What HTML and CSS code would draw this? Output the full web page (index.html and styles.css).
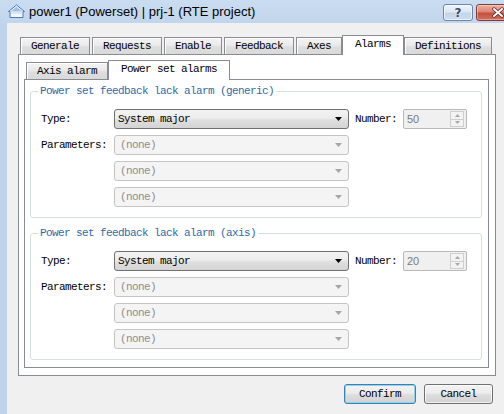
FILE: index.html
```html
<!DOCTYPE html>
<html>
<head>
<meta charset="utf-8">
<title>power1 (Powerset)</title>
<link rel="stylesheet" href="styles.css">
</head>
<body>
<div class="window">
  <div class="titlebar">
    <svg class="app-icon" width="17" height="14" viewBox="0 0 17 14">
      <path d="M0.5 7.5 L8.5 1 L16.5 7.5 L15 7.5 L15 13.5 L2 13.5 L2 7.5 Z" fill="#f4f8fd" stroke="#4a78b8"/>
      <path d="M2.5 7.5 L8.5 2.8 L14.5 7.5 Z" fill="#9fc0e8"/>
      <path d="M3 9 L14 9" stroke="#bcd3ee"/>
    </svg>
    <span class="title">power1 (Powerset) | prj-1 (RTE project)</span>
    <div class="caption-buttons">
      <div class="cap-btn help"><span>?</span></div>
      <div class="cap-btn close">
        <svg width="14" height="11" viewBox="0 0 14 11">
          <path d="M3 2 L11 9 M11 2 L3 9" stroke="#5a1f1f" stroke-width="3.4" stroke-linecap="round"/>
          <path d="M3 2 L11 9 M11 2 L3 9" stroke="#ffffff" stroke-width="2" stroke-linecap="round"/>
        </svg>
      </div>
    </div>
  </div>
  <div class="client">
    <div class="tabwidget">
      <div class="tabbar">
        <div class="tab">Generale</div>
        <div class="tab">Requests</div>
        <div class="tab">Enable</div>
        <div class="tab">Feedback</div>
        <div class="tab">Axes</div>
        <div class="tab active">Alarms</div>
        <div class="tab">Definitions</div>
      </div>
      <div class="pane outer-pane">
        <div class="tabwidget">
          <div class="tabbar">
            <div class="tab">Axis alarm</div>
            <div class="tab active">Power set alarms</div>
          </div>
          <div class="pane inner-pane">
            <fieldset class="group">
              <legend>Power set feedback lack alarm (generic)</legend>
              <div class="form">
                <div class="label">Type:</div>
                <div class="combo">
                  <span class="value">System major</span>
                  <svg class="arrow" width="7" height="4" viewBox="0 0 7 4"><path d="M0 0 H7 L3.5 4 Z" fill="#000"/></svg>
                </div>
                <div class="label num-label">Number:</div>
                <div class="spin">
                  <span class="spin-value">50</span>
                  <div class="spin-btns">
                    <div class="spin-btn"><svg width="5" height="3" viewBox="0 0 5 3"><path d="M0 3 L2.5 0 L5 3 Z" fill="#a8a8a8"/></svg></div>
                    <div class="spin-btn"><svg width="5" height="3" viewBox="0 0 5 3"><path d="M0 0 L5 0 L2.5 3 Z" fill="#a8a8a8"/></svg></div>
                  </div>
                </div>
                <div class="label">Parameters:</div>
                <div class="combo disabled">
                  <span class="value">(none)</span>
                  <svg class="arrow" width="7" height="4" viewBox="0 0 7 4"><path d="M0 0 H7 L3.5 4 Z" fill="#a6a6a6"/></svg>
                </div>
                <div class="filler"></div>
                <div class="combo disabled">
                  <span class="value">(none)</span>
                  <svg class="arrow" width="7" height="4" viewBox="0 0 7 4"><path d="M0 0 H7 L3.5 4 Z" fill="#a6a6a6"/></svg>
                </div>
                <div class="filler"></div>
                <div class="combo disabled">
                  <span class="value">(none)</span>
                  <svg class="arrow" width="7" height="4" viewBox="0 0 7 4"><path d="M0 0 H7 L3.5 4 Z" fill="#a6a6a6"/></svg>
                </div>
              </div>
            </fieldset>
            <fieldset class="group">
              <legend>Power set feedback lack alarm (axis)</legend>
              <div class="form">
                <div class="label">Type:</div>
                <div class="combo">
                  <span class="value">System major</span>
                  <svg class="arrow" width="7" height="4" viewBox="0 0 7 4"><path d="M0 0 H7 L3.5 4 Z" fill="#000"/></svg>
                </div>
                <div class="label num-label">Number:</div>
                <div class="spin">
                  <span class="spin-value">20</span>
                  <div class="spin-btns">
                    <div class="spin-btn"><svg width="5" height="3" viewBox="0 0 5 3"><path d="M0 3 L2.5 0 L5 3 Z" fill="#a8a8a8"/></svg></div>
                    <div class="spin-btn"><svg width="5" height="3" viewBox="0 0 5 3"><path d="M0 0 L5 0 L2.5 3 Z" fill="#a8a8a8"/></svg></div>
                  </div>
                </div>
                <div class="label">Parameters:</div>
                <div class="combo disabled">
                  <span class="value">(none)</span>
                  <svg class="arrow" width="7" height="4" viewBox="0 0 7 4"><path d="M0 0 H7 L3.5 4 Z" fill="#a6a6a6"/></svg>
                </div>
                <div class="filler"></div>
                <div class="combo disabled">
                  <span class="value">(none)</span>
                  <svg class="arrow" width="7" height="4" viewBox="0 0 7 4"><path d="M0 0 H7 L3.5 4 Z" fill="#a6a6a6"/></svg>
                </div>
                <div class="filler"></div>
                <div class="combo disabled">
                  <span class="value">(none)</span>
                  <svg class="arrow" width="7" height="4" viewBox="0 0 7 4"><path d="M0 0 H7 L3.5 4 Z" fill="#a6a6a6"/></svg>
                </div>
              </div>
            </fieldset>
          </div>
        </div>
      </div>
    </div>
    <div class="buttons">
      <div class="btn default">Confirm</div>
      <div class="btn cancel">Cancel</div>
    </div>
  </div>
</div>
</body>
</html>
```
FILE: styles.css
```css
* { box-sizing: border-box; }
html, body { margin: 0; padding: 0; }
body {
  width: 504px;
  height: 414px;
  overflow: hidden;
  font-family: "Liberation Mono", "DejaVu Sans Mono", monospace;
  font-size: 11px;
  letter-spacing: -0.6px;
  color: #000;
}
.window {
  width: 504px;
  height: 414px;
  display: flex;
  flex-direction: column;
  background: #bfd4eb;
  overflow: hidden;
}
.titlebar {
  height: 23px;
  display: flex;
  align-items: center;
  padding-left: 8px;
  background: linear-gradient(#cadcf0, #c1d5ec);
  flex-shrink: 0;
}
.app-icon { margin-top: -2px; }
.title {
  margin-left: 4px;
  font-family: "Liberation Sans", Arial, sans-serif;
  font-size: 13px;
  letter-spacing: 0;
  color: #000;
}
.caption-buttons {
  margin-left: auto;
  align-self: flex-start;
  margin-top: 4px;
  margin-right: -15px;
  display: flex;
  gap: 3px;
}
.cap-btn {
  height: 17px;
  border-radius: 3px;
  display: flex;
  align-items: center;
  justify-content: center;
}
.help {
  width: 30px;
  border: 1px solid #6b87ad;
  background: linear-gradient(#eef4fb 0%, #dbe6f3 48%, #c3d4ea 52%, #cddcef 100%);
  box-shadow: inset 0 0 0 1px rgba(255,255,255,0.6);
}
.help span {
  font-family: "DejaVu Sans", sans-serif;
  font-size: 12px;
  font-weight: bold;
  letter-spacing: 0;
  color: #3b4a60;
  text-shadow: 0 0 2px #fff, 0 0 1px #fff;
}
.close {
  width: 43px;
  border: 1px solid #833a3a;
  background: linear-gradient(#eab0a3 0%, #d98473 48%, #c34f3d 52%, #d2705d 100%);
  box-shadow: inset 0 0 0 1px rgba(255,255,255,0.35);
}
.client {
  flex: 1;
  margin-left: 7px;
  background: #f0f0f0;
  padding: 12px 8px 10px 11px;
  display: flex;
  flex-direction: column;
}
.tabwidget {
  display: flex;
  flex-direction: column;
}
.tabbar {
  display: flex;
  align-items: flex-end;
  height: 20px;
  margin-bottom: -1px;
  padding-left: 2px;
  position: relative;
  z-index: 2;
}
.tab {
  height: 17px;
  margin-bottom: 1px;
  margin-right: 2px;
  padding: 0 10px 1px;
  display: flex;
  align-items: center;
  border: 1px solid #898c95;
  border-bottom: none;
  background: linear-gradient(#f4f4f4 0%, #ebebeb 45%, #dedede 55%, #d9d9d9 100%);
  box-shadow: inset 1px 1px 0 #ffffff;
  white-space: nowrap;
}
.tab.active {
  height: 20px;
  margin-bottom: 0;
  margin-left: -2px;
  margin-right: 0;
  padding: 0 12px 3px;
  background: #ffffff;
  box-shadow: none;
}
.pane {
  border: 1px solid #898c95;
  background: #ffffff;
  position: relative;
  z-index: 1;
}
.outer-pane { padding: 5px 6px 7px 5px; }
.inner-pane {
  padding: 5px 6px 7px 5px;
  display: flex;
  flex-direction: column;
  gap: 9px;
}
.group {
  margin: 0;
  padding: 12px 0 10px 0;
  border: 1px solid #d5dfe5;
  border-radius: 3px;
  min-width: 0;
}
.group legend {
  margin-left: 7px;
  padding: 0 2px;
  line-height: 12px;
  height: 12px;
  color: #2f6aa6;
}
.form {
  padding-left: 10px;
  display: grid;
  grid-template-columns: 73px 235px 54px 64px;
  grid-auto-rows: 20px;
  row-gap: 6px;
  align-items: center;
}
.label { white-space: nowrap; }
.num-label { padding-left: 6px; }
.combo {
  height: 20px;
  display: flex;
  align-items: center;
  padding-left: 3px;
  border-radius: 3px;
  border: 1px solid #707070;
  background: linear-gradient(#f3f3f3 0%, #ececec 45%, #dfdfdf 55%, #d4d4d4 100%);
}
.combo .arrow { margin-left: auto; margin-right: 6px; }
.combo.disabled {
  border-color: #c4c4c4;
  background: #f4f4f4;
  color: #8d8d8d;
}
.combo.disabled .value { padding-left: 2px; }
.filler { grid-column: 1; }
.spin {
  height: 20px;
  display: flex;
  align-items: center;
  border: 1px solid #b9b9b9;
  border-radius: 2px;
  background: #f0f0f0;
  padding: 1px 1px 1px 3px;
}
.spin-value {
  font-family: "Liberation Sans", Arial, sans-serif;
  font-size: 11px;
  letter-spacing: 0;
  color: #7a7a7a;
}
.spin-btns {
  margin-left: auto;
  width: 14px;
  height: 16px;
  display: flex;
  flex-direction: column;
  margin-right: 1px;
}
.spin-btn {
  flex: 1;
  display: flex;
  align-items: center;
  justify-content: center;
  border: 1px solid #cfcfcf;
  background: #f3f3f3;
}
.spin-btn + .spin-btn { border-top: none; }
.buttons {
  margin-top: 8px;
  padding-right: 3px;
  display: flex;
  justify-content: flex-end;
  gap: 8px;
}
.btn {
  height: 20px;
  display: flex;
  align-items: center;
  justify-content: center;
  border-radius: 3px;
  border: 1px solid #707070;
  background: linear-gradient(#f3f3f3 0%, #ececec 45%, #dddddd 55%, #d2d2d2 100%);
  box-shadow: inset 0 0 0 1px rgba(255,255,255,0.7);
}
.btn.default {
  width: 72px;
  border-color: #3c7fb1;
  box-shadow: inset 0 0 0 1px #8fd3f2;
}
.btn.cancel { width: 69px; }
```
